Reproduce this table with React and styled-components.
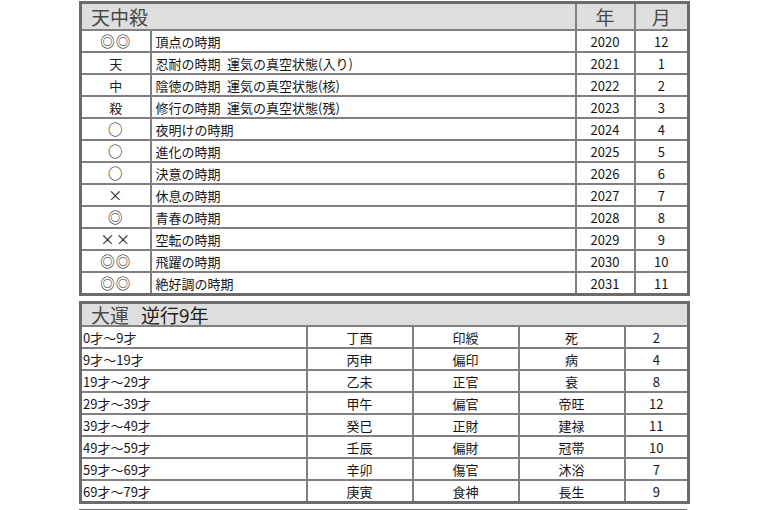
import styled, { createGlobalStyle } from "styled-components";

const GlobalStyle = createGlobalStyle`
  html, body {
    margin: 0;
    padding: 0;
    background: #fff;
  }
  body {
    font-family: "Noto Sans CJK JP", "Noto Sans", sans-serif;
    color: #151515;
  }
`;

const Page = styled.div`
  width: 608px;
  margin-left: 79px;
  padding-top: 1px;
  display: flex;
  flex-direction: column;
  gap: 5px;
`;

const Table = styled.table`
  width: 100%;
  table-layout: fixed;
  border-collapse: collapse;
  border: 3px solid #6b6b6b;
  font-size: 13px;
  line-height: 1;
`;

const Head = styled.th`
  height: ${(p) => p.$h || 24}px;
  padding: 0 0 0 ${(p) => (p.$center ? 0 : 9)}px;
  background: #dedede;
  border: 2px solid #808080;
  font-size: 19px;
  font-weight: 400;
  color: #4a4a4a;
  text-align: ${(p) => (p.$center ? "center" : "left")};
  vertical-align: middle;
`;

const Strong = styled.span`
  margin-left: 12px;
  color: #1e1e1e;
`;

const Cell = styled.td`
  height: 20px;
  border: 2px solid #808080;
  padding: 0 0 0 ${(p) => p.$pl ?? 0}px;
  text-align: ${(p) => (p.$pl != null ? "left" : "center")};
  vertical-align: middle;
  white-space: nowrap;
  overflow: hidden;
`;

// symbols (◎ ○ ×) render small in this font, kanji marks stay at body size
const Mark = styled(Cell)`
  font-size: ${(p) => (p.$symbol ? 14.5 : 13)}px;
  letter-spacing: ${(p) => (p.$symbol ? 1 : 0)}px;
  color: #222;
`;

const tenchu = [
  ["◎◎", "頂点の時期", 2020, 12],
  ["天", "忍耐の時期\u2002運気の真空状態(入り)", 2021, 1],
  ["中", "陰徳の時期\u2002運気の真空状態(核)", 2022, 2],
  ["殺", "修行の時期\u2002運気の真空状態(残)", 2023, 3],
  ["○", "夜明けの時期", 2024, 4],
  ["○", "進化の時期", 2025, 5],
  ["○", "決意の時期", 2026, 6],
  ["×", "休息の時期", 2027, 7],
  ["◎", "青春の時期", 2028, 8],
  ["××", "空転の時期", 2029, 9],
  ["◎◎", "飛躍の時期", 2030, 10],
  ["◎◎", "絶好調の時期", 2031, 11],
];

const taiun = [
  ["0才～9才", "丁酉", "印綬", "死", 2],
  ["9才～19才", "丙申", "偏印", "病", 4],
  ["19才～29才", "乙未", "正官", "衰", 8],
  ["29才～39才", "甲午", "偏官", "帝旺", 12],
  ["39才～49才", "癸巳", "正財", "建禄", 11],
  ["49才～59才", "壬辰", "偏財", "冠帯", 10],
  ["59才～69才", "辛卯", "傷官", "沐浴", 7],
  ["69才～79才", "庚寅", "食神", "長生", 9],
];

export default function App() {
  return (
    <>
      <GlobalStyle />
      <Page>
        <Table>
          <colgroup>
            <col style={{ width: 70 }} />
            <col style={{ width: 425 }} />
            <col style={{ width: 59 }} />
            <col style={{ width: 54 }} />
          </colgroup>
          <thead>
            <tr>
              <Head colSpan={2} $h={25}>天中殺</Head>
              <Head $center $h={25}>年</Head>
              <Head $center $h={25}>月</Head>
            </tr>
          </thead>
          <tbody>
            {tenchu.map(([mark, text, year, month]) => (
              <tr key={year}>
                <Mark $symbol={/[◎○×]/.test(mark)}>{mark}</Mark>
                <Cell $pl={4}>{text}</Cell>
                <Cell>{year}</Cell>
                <Cell>{month}</Cell>
              </tr>
            ))}
          </tbody>
        </Table>

        <Table>
          <colgroup>
            <col style={{ width: 226 }} />
            <col style={{ width: 106 }} />
            <col style={{ width: 106 }} />
            <col style={{ width: 106 }} />
            <col style={{ width: 64 }} />
          </colgroup>
          <thead>
            <tr>
              <Head colSpan={5} $h={21}>
                大運<Strong>逆行9年</Strong>
              </Head>
            </tr>
          </thead>
          <tbody>
            {taiun.map(([age, kanshi, star, phase, energy]) => (
              <tr key={age}>
                <Cell $pl={1}>{age}</Cell>
                <Cell>{kanshi}</Cell>
                <Cell>{star}</Cell>
                <Cell>{phase}</Cell>
                <Cell>{energy}</Cell>
              </tr>
            ))}
          </tbody>
        </Table>

        <Table>
          <thead>
            <tr>
              <Head $h={21}>&nbsp;</Head>
            </tr>
          </thead>
        </Table>
      </Page>
    </>
  );
}
